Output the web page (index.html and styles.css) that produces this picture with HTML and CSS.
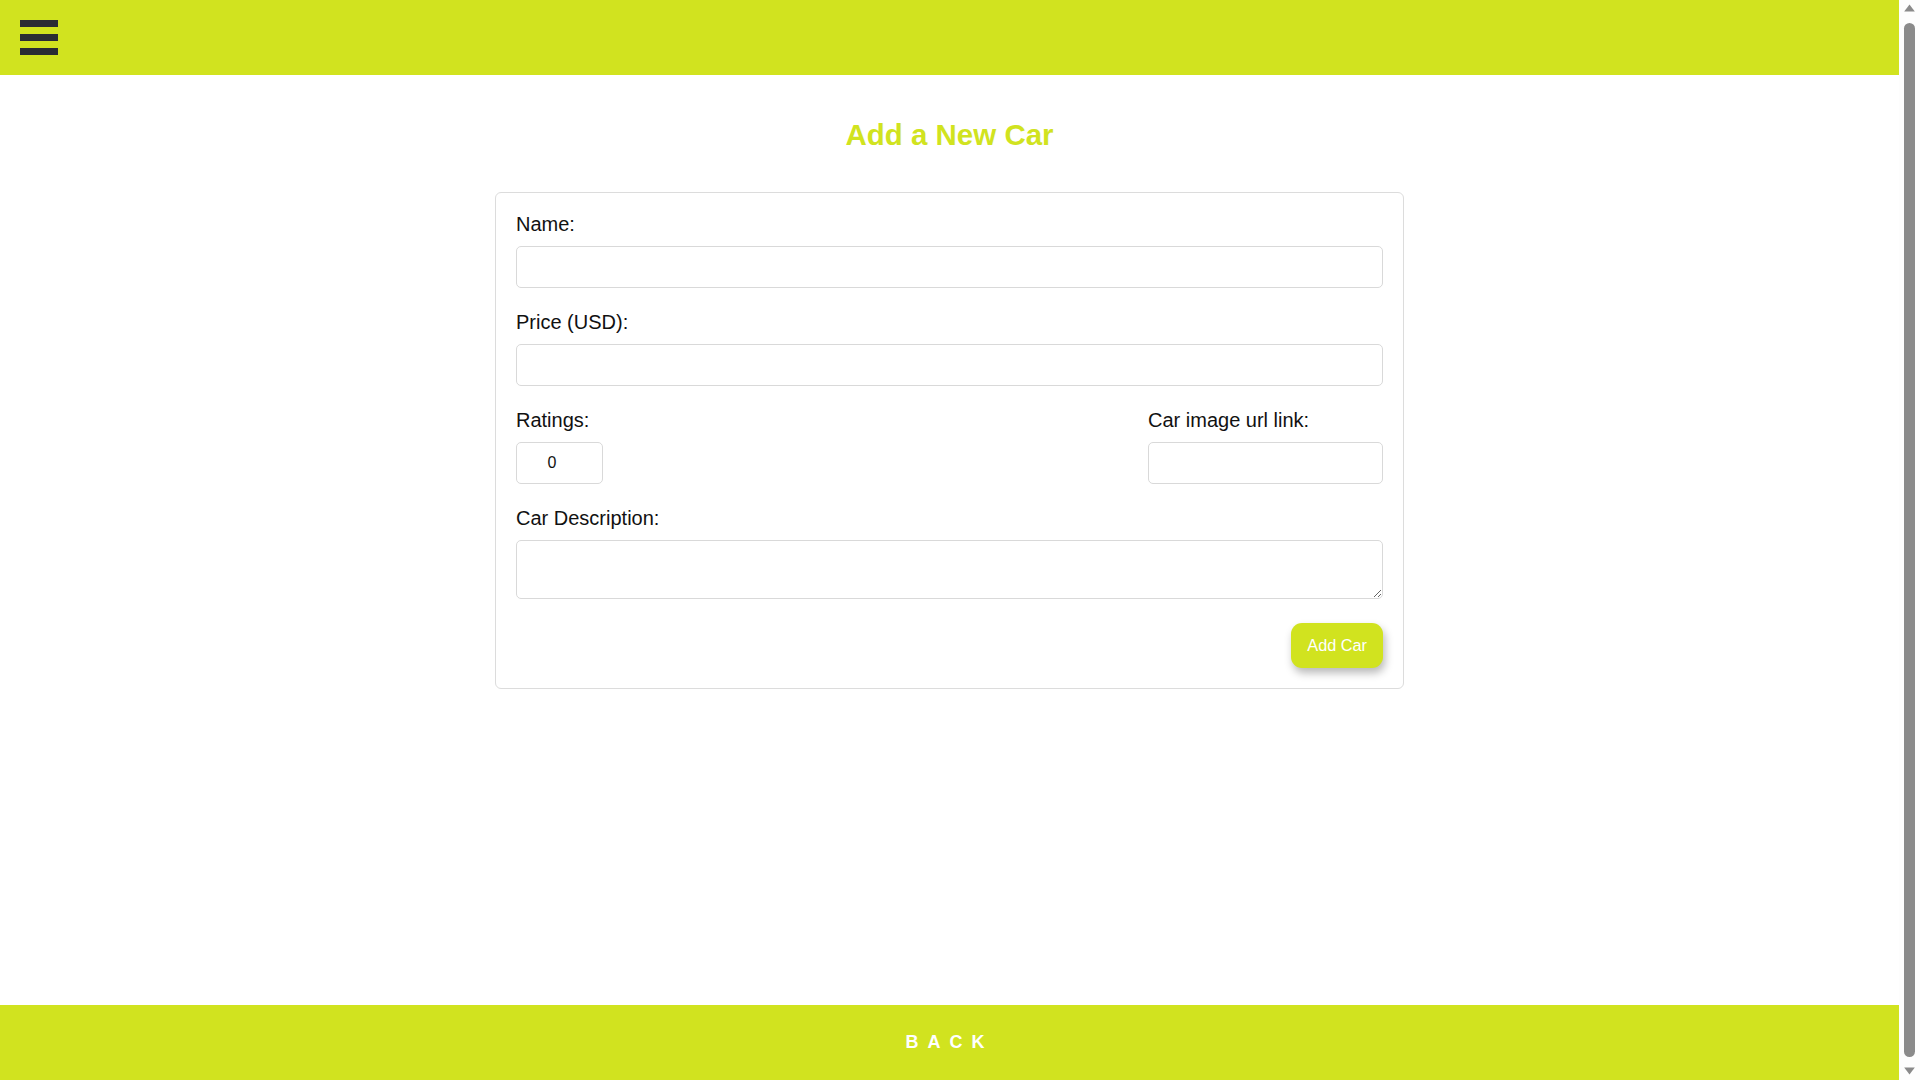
FILE: index.html
```html
<!DOCTYPE html>
<html lang="en">
<head>
<meta charset="utf-8">
<title>Add a New Car</title>
<link rel="stylesheet" href="styles.css">
</head>
<body>
<div class="page">
  <header class="topbar">
    <button class="menu" type="button" aria-label="Menu"><span></span><span></span><span></span></button>
  </header>
  <main class="content">
    <h1 class="title">Add a New Car</h1>
    <form class="card">
      <div class="field">
        <label for="name">Name:</label>
        <input id="name" type="text" class="input">
      </div>
      <div class="field">
        <label for="price">Price (USD):</label>
        <input id="price" type="text" class="input">
      </div>
      <div class="row">
        <div class="field">
          <label for="ratings">Ratings:</label>
          <input id="ratings" type="number" value="0" class="input rating">
        </div>
        <div class="field">
          <label for="url">Car image url link:</label>
          <input id="url" type="text" class="input url">
        </div>
      </div>
      <div class="field">
        <label for="desc">Car Description:</label>
        <textarea id="desc" class="input desc"></textarea>
      </div>
      <div class="actions">
        <button type="button" class="add">Add Car</button>
      </div>
    </form>
  </main>
  <footer class="bottombar">BACK</footer>
</div>
<div class="scrollbar" aria-hidden="true">
  <svg class="arrow up" width="11" height="8" viewBox="0 0 11 8"><path d="M5.5 0.5 L10.8 7.6 L0.2 7.6 Z" fill="#8a8a8a"/></svg>
  <div class="thumb"></div>
  <svg class="arrow down" width="11" height="8" viewBox="0 0 11 8"><path d="M0.2 0.4 L10.8 0.4 L5.5 7.5 Z" fill="#8a8a8a"/></svg>
</div>
</body>
</html>
```
FILE: styles.css
```css
html, body {
  height: 100%;
}

body {
  margin: 0;
  display: flex;
  overflow: hidden;
  font-family: "Liberation Sans", Arial, sans-serif;
  color: #111;
  background: #fff;
}

.page {
  flex: 1;
  min-width: 0;
  height: 100vh;
  display: flex;
  flex-direction: column;
}

.scrollbar {
  width: 21px;
  flex: none;
  height: 100vh;
  box-sizing: border-box;
  background: #fdfdfd;
  display: flex;
  flex-direction: column;
  padding: 4px 5px 5px;
}
.arrow {
  display: block;
  flex: none;
}
.thumb {
  flex: 1;
  margin: 11px 0 10px;
  width: 11px;
  border-radius: 6px;
  background: #8a8a8a;
}

.topbar {
  height: 75px;
  background: #d1e31f;
  display: flex;
  align-items: center;
  padding-left: 20px;
  flex: none;
}

.menu {
  display: flex;
  flex-direction: column;
  gap: 7px;
  padding: 0;
  border: 0;
  background: none;
  cursor: pointer;
}
.menu span {
  display: block;
  width: 38px;
  height: 7px;
  background: #2a2c33;
}
.menu span:first-child {
  height: 7.5px;
}

.content {
  flex: 1;
}

.title {
  margin: 43px 0 40px;
  text-align: center;
  font-size: 29.5px;
  line-height: 34px;
  font-weight: bold;
  color: #d1e31f;
}

.card {
  width: 909px;
  box-sizing: border-box;
  margin: 0 auto;
  border: 1px solid #dcdcdc;
  border-radius: 6px;
  padding: 20px;
}

.field {
  margin-bottom: 23px;
}
.field label {
  display: block;
  font-size: 20px;
  line-height: 23px;
  margin-bottom: 10px;
  color: #111;
}

.input {
  display: block;
  width: 100%;
  height: 42px;
  box-sizing: border-box;
  border: 1px solid #d9d9d9;
  border-radius: 5px;
  background: #fff;
  font-family: "Liberation Sans", Arial, sans-serif;
  font-size: 16px;
  padding: 0 10px;
  color: #111;
}

.row {
  display: flex;
  justify-content: space-between;
}
.rating {
  width: 87px;
  text-align: center;
}
.url {
  width: 235px;
}

.desc {
  height: 59px;
  padding: 8px 10px;
  resize: both;
}

.actions {
  display: flex;
  justify-content: flex-end;
}

.add {
  height: 45px;
  padding: 0 16px;
  margin-top: 1px;
  border: 0;
  border-radius: 11px;
  background: #d1e31f;
  color: #fff;
  font-family: "Liberation Sans", Arial, sans-serif;
  font-size: 16.3px;
  box-shadow: 2px 5px 8px rgba(0, 0, 0, 0.28);
  cursor: pointer;
}

.bottombar {
  height: 75px;
  line-height: 75px;
  background: #d1e31f;
  color: #fff;
  text-align: center;
  font-size: 18px;
  font-weight: bold;
  letter-spacing: 9px;
  flex: none;
}
```
